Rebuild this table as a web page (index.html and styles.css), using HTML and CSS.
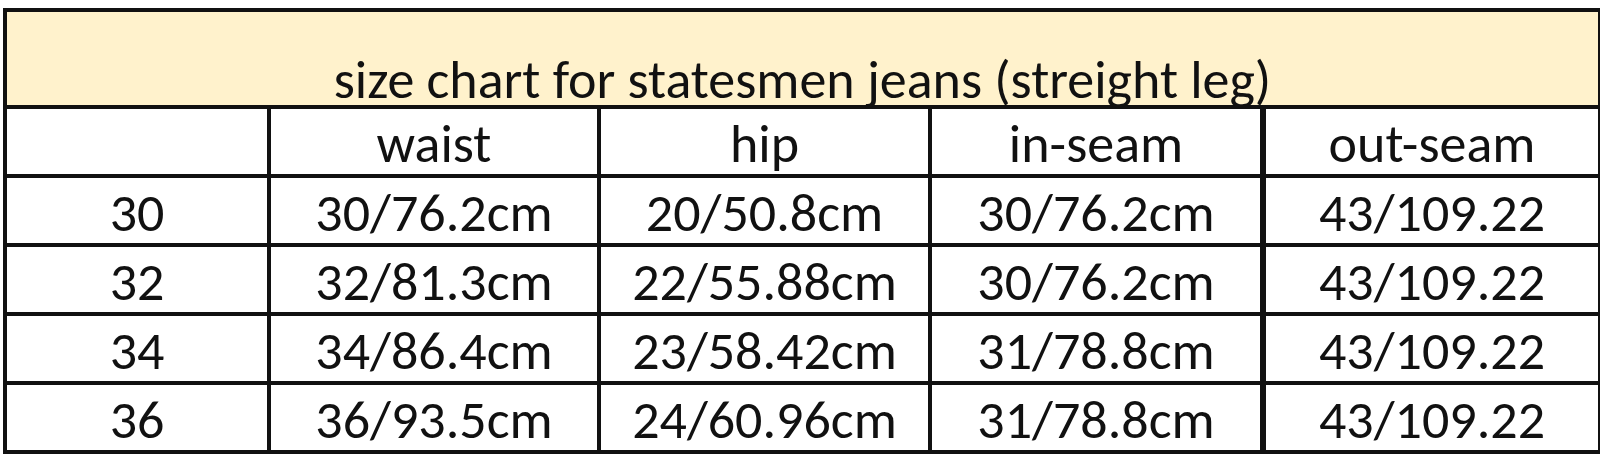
FILE: index.html
```html
<!DOCTYPE html>
<html>
<head>
<meta charset="utf-8">
<link rel="stylesheet" href="styles.css">
</head>
<body>
<table class="chart">
  <colgroup>
    <col class="c-size">
    <col class="c-waist">
    <col class="c-hip">
    <col class="c-in">
    <col class="c-out">
  </colgroup>
  <tr class="title-row"><td colspan="5" class="title">size chart for statesmen jeans (streight leg)</td></tr>
  <tr class="row"><td></td><td>waist</td><td>hip</td><td>in-seam</td><td class="thick">out-seam</td></tr>
  <tr class="row"><td>30</td><td>30/76.2cm</td><td>20/50.8cm</td><td>30/76.2cm</td><td class="thick">43/109.22</td></tr>
  <tr class="row"><td>32</td><td>32/81.3cm</td><td>22/55.88cm</td><td>30/76.2cm</td><td class="thick">43/109.22</td></tr>
  <tr class="row"><td>34</td><td>34/86.4cm</td><td>23/58.42cm</td><td>31/78.8cm</td><td class="thick">43/109.22</td></tr>
  <tr class="row"><td>36</td><td>36/93.5cm</td><td>24/60.96cm</td><td>31/78.8cm</td><td class="thick">43/109.22</td></tr>
</table>
</body>
</html>
```

FILE: styles.css
```css
html, body {
  margin: 0;
  padding: 0;
  background: #ffffff;
}

.chart {
  margin: 8px 0 0 3px;
  width: 1595px;
  border-collapse: collapse;
  table-layout: fixed;
  font-family: Carlito, "Open Sans", sans-serif;
  color: #111111;
}

.c-size { width: 264px; }
.c-waist { width: 330px; }
.c-hip { width: 331px; }
.c-in { width: 333px; }
.c-out { width: 337px; }

.chart td {
  border: 4px solid #111111;
  padding: 0;
  text-align: center;
  vertical-align: bottom;
  white-space: nowrap;
}

.title-row { height: 97px; }
.row { height: 69px; }

.title {
  background: #fff2cc;
  font-size: 54px;
  line-height: 0.9;
  padding-bottom: 5px;
}

.row td {
  font-size: 54px;
  line-height: 1;
  padding-bottom: 3px;
}

.chart td.thick {
  border-left-width: 6px;
}
```
